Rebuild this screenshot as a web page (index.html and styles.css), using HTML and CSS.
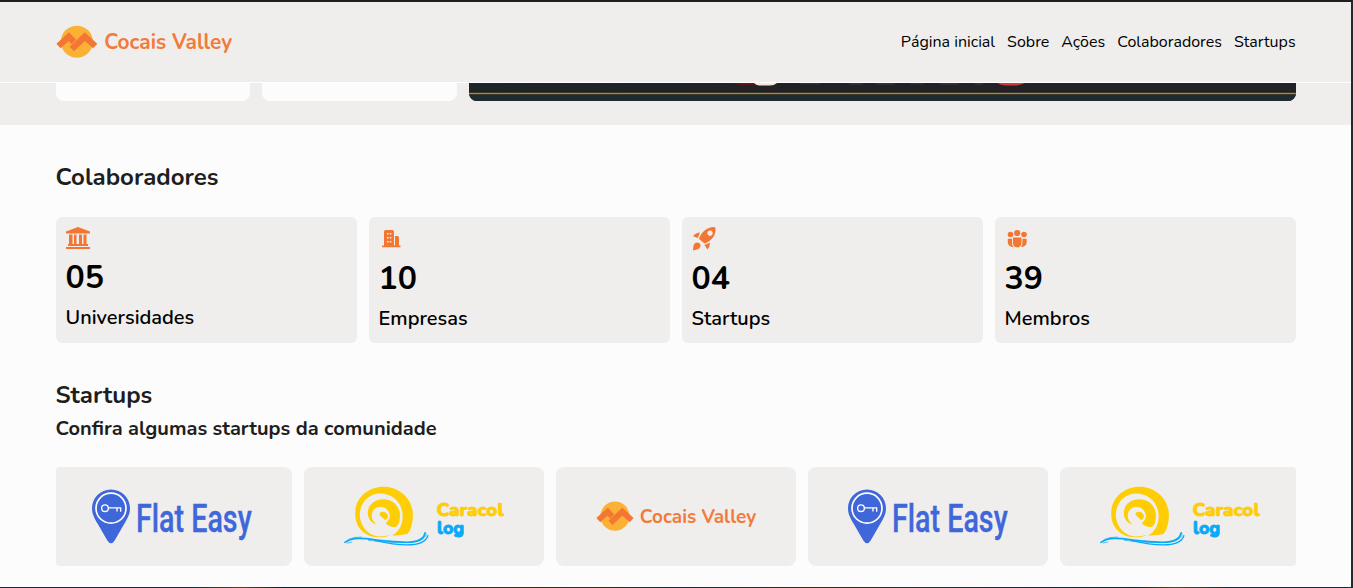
FILE: index.html
```html
<!DOCTYPE html>
<html lang="pt-BR">
<head>
<meta charset="utf-8">
<title>Cocais Valley</title>
<link rel="stylesheet" href="styles.css">
</head>
<body>
<svg class="defs" aria-hidden="true">
  <symbol id="cocais" viewBox="0 0 530 99">
    <circle cx="62" cy="50" r="48" fill="#fab136"/>
    <g fill="none" stroke="#f37733" stroke-width="19" stroke-linejoin="miter">
      <path d="M7 63 38 35 53 51"/>
      <path d="M47 72 86 35 117 63"/>
    </g>
    <text x="144" y="72" class="cocais-text" textLength="384" lengthAdjust="spacingAndGlyphs">Cocais Valley</text>
  </symbol>
  <symbol id="flat" viewBox="123 75 486 186">
    <path d="M183 87C151 87 126 112 126 143C126 161 134 174 143 190L172 240Q183 257 194 240L223 190C232 174 240 161 240 143C240 112 215 87 183 87Z" fill="#4067da"/>
    <circle cx="183" cy="143" r="45" fill="none" stroke="#fff" stroke-width="5"/>
    <g fill="none" stroke="#fff" stroke-width="4"><circle cx="165" cy="143" r="10"/><path d="M175 142H212V154M201 142V153"/></g>
    <text x="258" y="214" class="flat-text" textLength="347" lengthAdjust="spacingAndGlyphs">Flat Easy</text>
  </symbol>
  <symbol id="caracol" viewBox="130 75 485 190">
    <g fill="#ffcd05">
      <path d="M272 226C240 242 165 234 165 160C165 112 205 80 250 80C300 80 339 118 339 165C339 190 332 215 322 223Q300 228 277 227C298 215 308 195 308 170C308 128 278 101 240 101C205 101 179 130 179 165C179 200 208 232 240 230Q258 230 272 226Z"/>
      <path d="M232 194C212 190 203 175 203 160C203 135 222 118 250 118C280 118 300 140 300 168C300 185 296 195 288 202Q268 202 257 190C268 182 272 170 268 160C262 145 250 140 238 141C222 142 215 155 215 168C215 180 222 190 232 194Z"/>
      <path d="M238 163C240 153 255 153 262 163C266 172 262 180 253 180C250 172 242 172 238 163Z"/>
    </g>
    <g fill="none" stroke="#08a9f7" stroke-linecap="round">
      <path d="M134 248C165 226 210 240 260 244C315 249 370 255 376 219" stroke-width="5"/>
      <path d="M225 243C290 257 372 269 384 228" stroke-width="4"/>
      <path d="M205 242C285 248 367 262 380 223" stroke-width="2"/>
      <path d="M144 239Q160 231 184 232M141 250L155 247" stroke-width="2"/>
    </g>
    <text x="410" y="169" class="caracol-text" fill="#ffcd05" stroke="#ffcd05" textLength="203" lengthAdjust="spacingAndGlyphs">Caracol</text>
    <text x="412" y="223" class="caracol-text" fill="#08a9f7" stroke="#08a9f7" textLength="82" lengthAdjust="spacingAndGlyphs">log</text>
  </symbol>
</svg>

<div class="page">
  <header class="header">
    <svg class="brand" role="img" aria-label="Cocais Valley"><use href="#cocais"/></svg>
    <nav class="nav">
      <a>Página inicial</a><a>Sobre</a><a>Ações</a><a>Colaboradores</a><a>Startups</a>
    </nav>
  </header>

  <section class="events">
    <div class="event-card"></div>
    <div class="event-card"></div>
    <div class="banner">
      <svg class="banner-art" viewBox="0 0 827 18" preserveAspectRatio="none">
        <path d="M265 0H288V2H270Z" fill="#6c1113"/>
        <path d="M285 0H308Q305 2.500 301 2.500H290Q287 2 285 0Z" fill="#fbe4d9"/>
        <path d="M529 0H556Q551 2.500 546 2.500H537Q531 2 529 0Z" fill="#d23a35"/>
        <path d="M330 0h22l-3 1.500h-16zM378 0h17l-3 2h-10zM405 0h23l-4 2h-14zM440 0h16l-3 1.500h-10zM469 0h22l-3 2h-14zM504 0h12l-4 2h-4z" fill="#303133"/>
        <rect y="9" width="827" height="3" fill="#3d3523"/>
        <rect y="10" width="827" height="1" fill="#a39439"/>
        <rect y="12" width="827" height="6" fill="#1e2b30"/>
      </svg>
    </div>
  </section>

  <main class="content">
    <h2 class="title">Colaboradores</h2>
    <div class="stats">
      <article class="stat stat-first">
        <svg class="icon" viewBox="0 0 24 24" fill="#f37733"><path d="M12 0 24 4.500V6.500H0V4.500ZM3 7.500H6.500V17H8V7.500H10.500V17H13V7.500H16V17H17.500V7.500H20.500V17H22V19H2V17H3ZM0 20H24V22H0Z"/></svg>
        <strong class="number">05</strong><span class="label">Universidades</span>
      </article>
      <article class="stat">
        <svg class="icon" viewBox="0 0 24 24" fill="#f37733" fill-rule="evenodd"><path d="M5 4.500Q5 3 6.500 3H13.500Q15 3 15 4.500V18.500H16V9H18.500Q20 9 20 10.500V18.500H21.500V20.300H3V18.500H5ZM8 6V7.500H9.600V6ZM10.800 6V7.500H12.400V6ZM8 10V11.500H9.600V10ZM10.800 10V11.500H12.400V10ZM8 14V15.500H9.600V14ZM10.800 14V15.500H12.400V14Z"/></svg>
        <strong class="number">10</strong><span class="label">Empresas</span>
      </article>
      <article class="stat">
        <svg class="icon" viewBox="0 0 24 24" fill="#f37733" fill-rule="evenodd"><path d="M7 12C9 5 15 0 22 0Q23.500 0 23.500 1.500C24 8 20 14 12.500 16.500ZM18 3.500a2.700 2.700 0 1 0 .01 0ZM8 5.500 5.800 11 1 9.200Q4 5.500 8 5.500ZM18 15.500Q18 20 15.500 22.500L12.500 18ZM1 23.500Q1 15.500 5 15.500A3.600 3.600 0 0 1 8.600 19Q8 22.500 1 23.500Z"/></svg>
        <strong class="number">04</strong><span class="label">Startups</span>
      </article>
      <article class="stat">
        <svg class="icon" viewBox="0 0 24 24" fill="#f37733"><circle cx="12.200" cy="6" r="3.100"/><circle cx="5.500" cy="7.500" r="2.800"/><circle cx="19" cy="7.500" r="2.800"/><path d="M8.300 10.500H16Q16.500 10.500 16.500 11.500V15.500C16.500 18 15 20.400 12.200 20.400S7.900 18 7.900 15.500V11.500Q7.900 10.500 8.300 10.500ZM3.500 11.800H7V16Q7 18.500 8.400 20C4.500 20 2.800 17.500 2.800 15V12.500Q2.800 11.800 3.500 11.800ZM17.400 11.800H21Q21.700 11.800 21.700 12.500V15C21.700 17.500 20 20 16 20Q17.400 18.500 17.400 16Z"/></svg>
        <strong class="number">39</strong><span class="label">Membros</span>
      </article>
    </div>

    <h2 class="title">Startups</h2>
    <p class="subtitle">Confira algumas startups da comunidade</p>
    <div class="carousel">
      <div class="slide"><svg class="logo" role="img" aria-label="Flat Easy"><use href="#flat"/></svg></div>
      <div class="slide"><svg class="logo" role="img" aria-label="Caracol log"><use href="#caracol"/></svg></div>
      <div class="slide"><svg class="logo logo-cocais" role="img" aria-label="Cocais Valley"><use href="#cocais"/></svg></div>
      <div class="slide"><svg class="logo" role="img" aria-label="Flat Easy"><use href="#flat"/></svg></div>
      <div class="slide"><svg class="logo" role="img" aria-label="Caracol log"><use href="#caracol"/></svg></div>
    </div>
  </main>
  <div class="footer-edge"></div>
</div>
</body>
</html>
```
FILE: styles.css
```css
* { box-sizing: border-box; }
body { margin: 0; font-family: Nunito, Lato, sans-serif; color: #000; }
.defs { display: none; }
.page { height: 588px; overflow: hidden; display: flex; flex-direction: column; background: #fcfcfc; border-top: 2px solid #211e1f; border-right: 2px solid #292929; }
.header { height: 81px; flex: none; display: flex; justify-content: space-between; align-items: center; padding: 0 55.4px 0 56px; background: #efeeec; border-bottom: 1px solid #fff; }
.brand { width: 177px; height: 33px; margin: 0 0 2px -.4px; }
.nav { display: flex; gap: 12px; font-size: 16px; line-height: 22px; }
.nav a { white-space: nowrap; }
.events { height: 42px; flex: none; display: grid; grid-template-columns: 194px 195px 827px; gap: 12px; padding: 0 0 24px 56px; background: #efeeec; }
.event-card { background: #fcfcfc; border-radius: 0 0 8px 8px; }
.banner { overflow: hidden; border-radius: 0 0 8px 8px; background: linear-gradient(90deg, #1d2526, #222125 45%); }
.banner-art { display: block; width: 827px; height: 18px; }
.content { flex: 1; padding: 36px 55px 0 55.6px; }
.title { margin: 0; font-size: 24px; line-height: 32px; font-weight: 700; color: #1e1e20; }
.stats { display: grid; grid-template-columns: repeat(4, 301px); gap: 12px; margin: 24px 0 36px .4px; }
.stat { height: 126px; padding: 10px 9.6px; display: flex; flex-direction: column; background: #efeeec; border-radius: 6px; }
.icon { width: 24px; height: 24px; flex: none; overflow: visible; margin-left: .4px; }
.stat-first .icon { margin-bottom: -1px; }
.number { margin-top: 8px; font-size: 32px; line-height: 40px; font-weight: 700; }
.label { margin-top: 5px; font-size: 20px; line-height: 30px; font-weight: 600; }
.subtitle { margin: 5px 0 25px; font-size: 20px; line-height: 26px; font-weight: 700; color: #1e1e20; }
.carousel { width: 1240px; height: 99px; margin-left: .4px; overflow: hidden; display: flex; gap: 12px; border-radius: 3px; }
.slide { flex: none; width: 240px; height: 99px; display: flex; justify-content: center; align-items: center; background: #efeeec; border-radius: 8px; }
.slide:first-child { margin-left: -4px; }
.logo { width: 162px; height: 63px; }
.logo-cocais { width: 161px; height: 30px; margin: 0 0 1px 1px; }
.cocais-text { font-family: Nunito, Lato, sans-serif; font-size: 63px; font-weight: 700; fill: #f37a3a; }
.flat-text { font-family: "Liberation Sans Narrow", Roboto, sans-serif; font-size: 119px; font-weight: 500; fill: #4067da; stroke: #4067da; stroke-width: 1px; }
.caracol-text { font-family: Nunito, Lato, sans-serif; font-size: 56px; font-weight: 800; stroke-width: 2.5px; }
.footer-edge { height: 1px; flex: none; background: linear-gradient(90deg, #122f38 0 14%, #5a4217 18%, #0c1e24 21% 32%, #352e1c 35%, #402b15 44%, #0e3038 50%, #3d2d17 60%, #0f3037 75%, #152426 84%, #56451c 87%, #0f3036 91%); }
```
